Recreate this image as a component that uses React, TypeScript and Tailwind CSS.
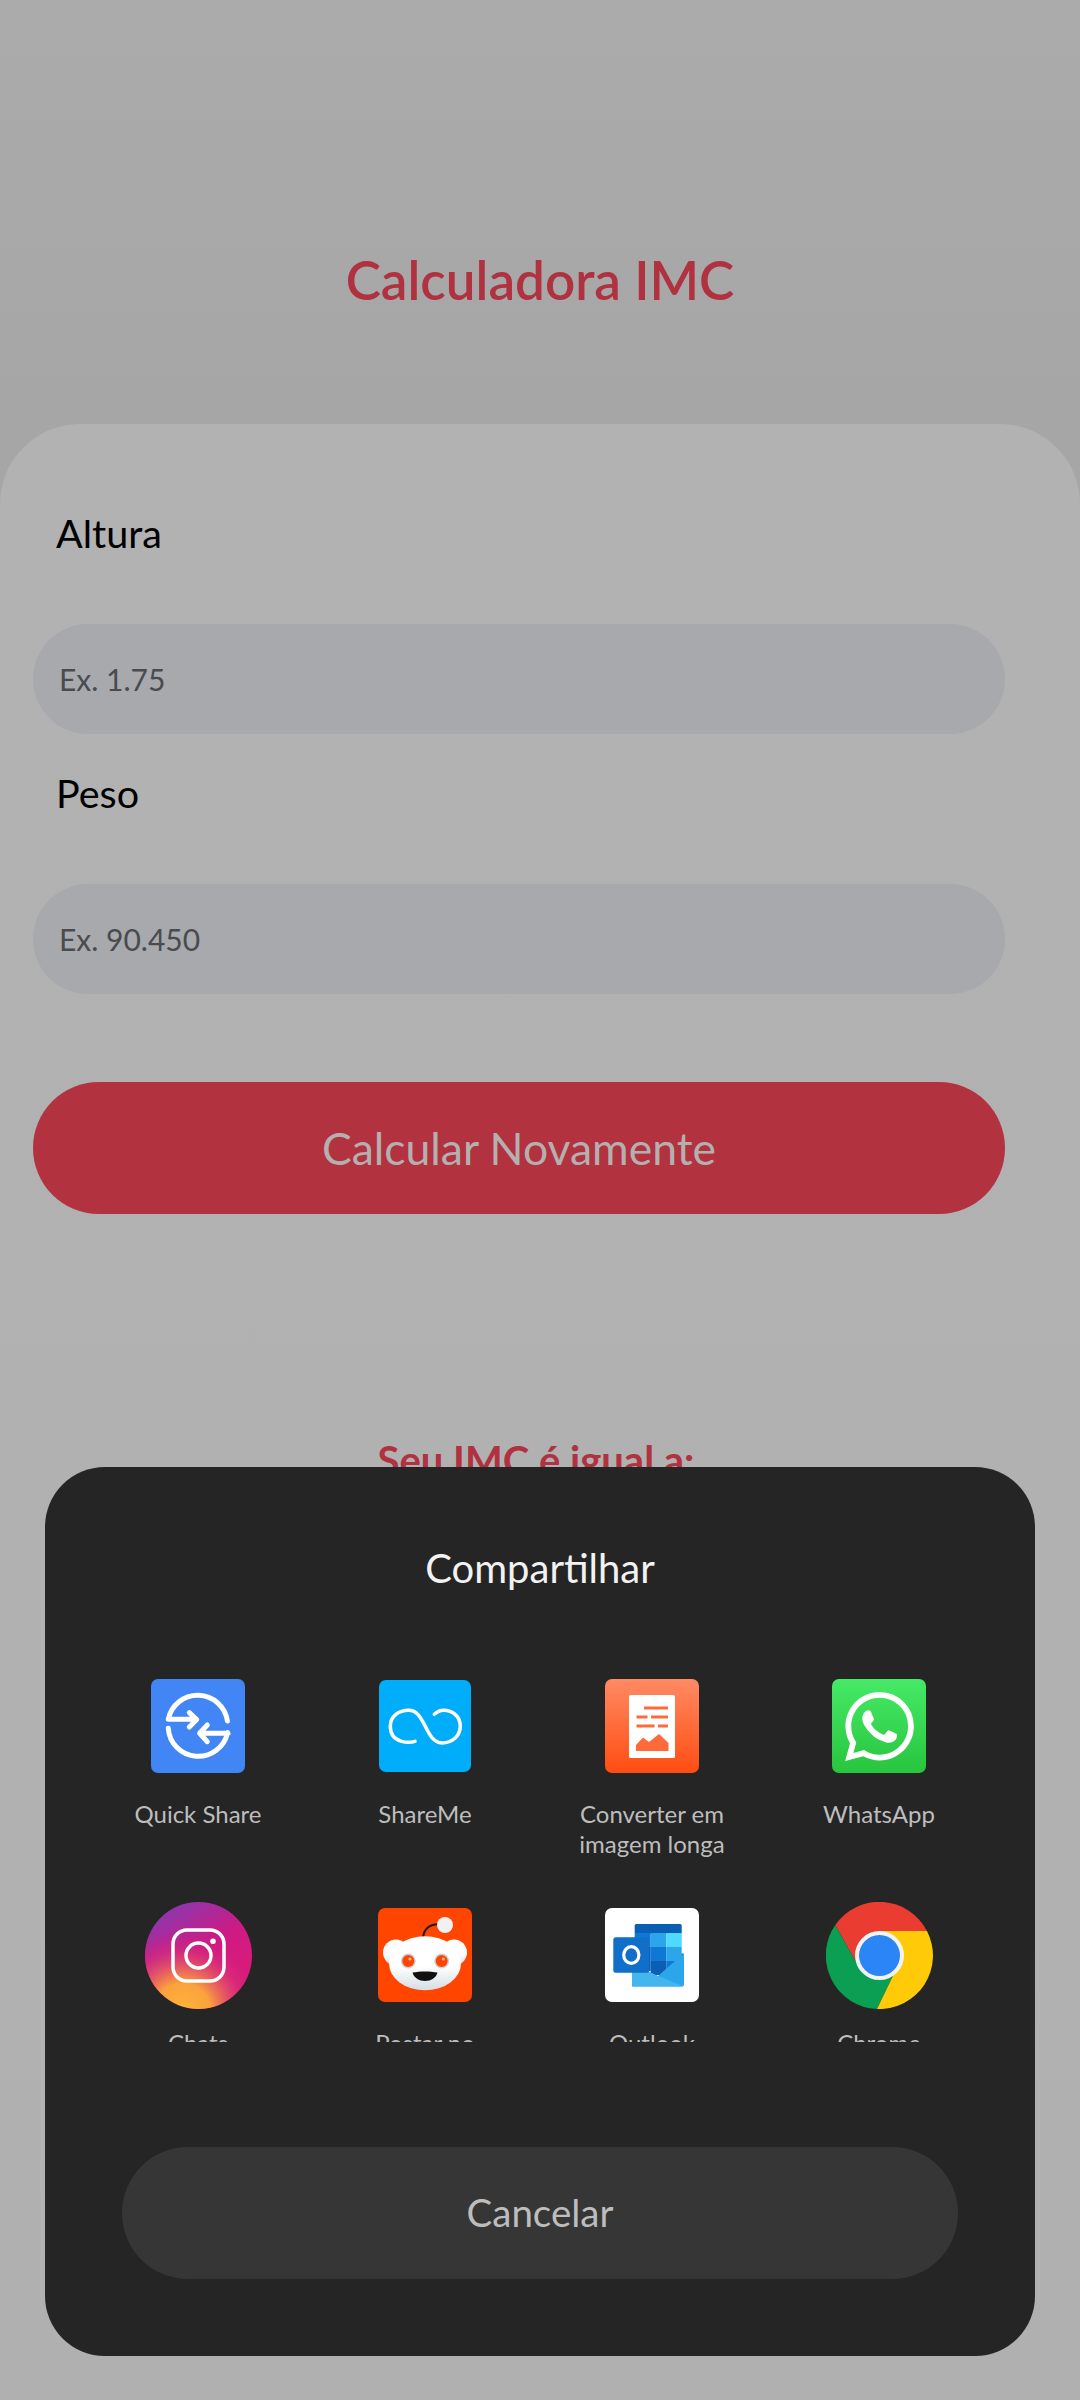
import React from 'react';
import { SiWhatsapp } from 'react-icons/si';

const QuickShareIcon = () => (
  <svg width="94" height="94" viewBox="0 0 94 94" fill="none">
    <rect width="94" height="94" rx="7" fill="#4285f4" />
    <g stroke="#fff" strokeWidth="5" strokeLinecap="round" strokeLinejoin="round">
      <path d="M17.3 40.3A30 30 0 0 1 76.4 42M17.3 40.3H45M38.3 33.7L45.7 40.6L38.3 48" />
      <path d="M17.3 49.3A30 30 0 0 0 76.6 53.5L77 54.3H49M56.3 46L48.6 54.3L56.3 62.7" />
    </g>
  </svg>
);

const ShareMeIcon = () => (
  <svg width="92" height="92" viewBox="0 0 92 92" fill="none">
    <rect width="92" height="92" rx="7" fill="#00adfa" />
    <path d="M36 61.3C31 63 11.3 64 11.3 46.3C11.3 36 20 30.3 29.7 30.3C38 30.3 42 38 46.3 46.3C50.5 55 55 63 63 63C73 63 81.3 56 81.3 46.3C81.3 36 73 30.3 64.7 30.3C61 30.3 58 31.8 55.3 34.3" stroke="#fff" strokeWidth="3.5" strokeLinecap="round" />
  </svg>
);

const LongImageIcon = () => (
  <svg width="94" height="94" viewBox="0 0 94 94" fill="none">
    <defs>
      <linearGradient id="longImg" x1="0" y1="0" x2="0" y2="1">
        <stop stopColor="#ff8a63" />
        <stop offset="1" stopColor="#ff4d12" />
      </linearGradient>
    </defs>
    <rect width="94" height="94" rx="7" fill="url(#longImg)" />
    <rect x="24" y="16" width="46" height="63" rx="1.5" fill="#fff" />
    <g fill="#ff6a3a">
      <rect x="39" y="27.5" width="24" height="3" />
      <rect x="31.5" y="36.5" width="11" height="3" />
      <rect x="46" y="36.5" width="17" height="3" />
      <rect x="31.5" y="45.5" width="18" height="3" />
      <rect x="53" y="45.5" width="10" height="3" />
      <path d="M31 72V66L38 58.5L44 63L54 55L63.5 64V72Z" />
    </g>
  </svg>
);

const WhatsAppIcon = () => (
  <div className="w-[94px] h-[94px] rounded-[7px] bg-gradient-to-b from-[#45ea66] to-[#28c53e] flex items-center justify-center">
    <SiWhatsapp size={69} color="#fff" />
  </div>
);

const InstagramIcon = () => (
  <svg width="107" height="107" viewBox="0 0 107 107" fill="none">
    <defs>
      <radialGradient id="igA" cx="0.35" cy="1.02" r="0.75">
        <stop stopColor="#fdb53a" />
        <stop offset="0.35" stopColor="#fba23c" />
        <stop offset="0.75" stopColor="#d9307a" stopOpacity="0.6" />
        <stop offset="1" stopColor="#d0197f" stopOpacity="0" />
      </radialGradient>
      <linearGradient id="igB" x1="0.3" y1="0" x2="0.7" y2="0.7">
        <stop stopColor="#8b38ae" />
        <stop offset="0.6" stopColor="#cd1a85" />
        <stop offset="1" stopColor="#d81b7a" />
      </linearGradient>
    </defs>
    <circle cx="53.5" cy="53.5" r="53.5" fill="url(#igB)" />
    <circle cx="53.5" cy="53.5" r="53.5" fill="url(#igA)" />
    <rect x="28" y="28" width="51" height="51" rx="14" stroke="#fff" strokeWidth="3.5" />
    <circle cx="53.5" cy="53.5" r="12.5" stroke="#fff" strokeWidth="3.5" />
    <circle cx="68" cy="39.3" r="2.8" fill="#fff" />
  </svg>
);

const RedditIcon = () => (
  <svg width="94" height="94" viewBox="0 0 94 94" fill="none">
    <defs>
      <linearGradient id="snoo" x1="0" y1="0" x2="0" y2="1">
        <stop offset="0.55" stopColor="#fff" />
        <stop offset="1" stopColor="#d5dee4" />
      </linearGradient>
    </defs>
    <rect width="94" height="94" rx="7" fill="#ff4500" />
    <path d="M45.3 29.7C45.3 22 51 16 60.3 16.2" stroke="#1a1a1a" strokeWidth="2" strokeLinecap="round" />
    <circle cx="67" cy="17" r="8" fill="#f1f1f1" />
    <circle cx="18" cy="44.5" r="13" fill="url(#snoo)" />
    <circle cx="76" cy="44.5" r="13" fill="url(#snoo)" />
    <ellipse cx="47" cy="55.3" rx="36" ry="27" fill="url(#snoo)" />
    <circle cx="30.3" cy="53" r="7.5" fill="#c9d2d8" />
    <circle cx="63.7" cy="53" r="7.5" fill="#c9d2d8" />
    <circle cx="30.3" cy="53" r="6" fill="#ff4500" />
    <circle cx="63.7" cy="53" r="6" fill="#ff4500" />
    <circle cx="32" cy="51" r="1.6" fill="#ffb199" />
    <circle cx="65.4" cy="51" r="1.6" fill="#ffb199" />
    <path d="M34.5 64.5C42 63 52 63 59.5 64.5C58 70 53 73 47 73C41 73 36 70 34.5 64.5Z" fill="#111" />
  </svg>
);

const OutlookIcon = () => (
  <svg width="94" height="94" viewBox="0 0 94 94" fill="none">
    <rect width="94" height="94" rx="7" fill="#fff" />
    <rect x="29.7" y="16" width="47" height="10" rx="1.5" fill="#0a5fb5" />
    <rect x="29.7" y="25" width="16" height="14" fill="#0f78d4" />
    <rect x="45.7" y="25" width="15.5" height="14" fill="#2ba6ea" />
    <rect x="61.2" y="25" width="15.5" height="14" fill="#50d9ff" />
    <rect x="29.7" y="39" width="16" height="14" fill="#0a5fb5" />
    <rect x="45.7" y="39" width="15.5" height="14" fill="#0f78d4" />
    <rect x="61.2" y="39" width="15.5" height="14" fill="#2ba6ea" />
    <rect x="29.7" y="53" width="16" height="10" fill="#0a5fb5" />
    <rect x="45.7" y="53" width="15.5" height="14" fill="#0a5fb5" />
    <rect x="61.2" y="53" width="15.5" height="10" fill="#0f78d4" />
    <path d="M76.7 45L79 47L76.7 48Z" fill="#0a3a70" />
    <path d="M27 78.5V56L53 68L79 45V76.5Q79 78.5 77 78.5Z" fill="#2ba6ea" />
    <path d="M27 56L53 68L79 78.5H29Q27 78.5 27 76.5Z" fill="#43b6ee" />
    <rect x="8.3" y="29.3" width="36" height="35.5" rx="2.5" fill="#0f6fc9" />
    <ellipse cx="26.3" cy="47" rx="7.6" ry="8.4" stroke="#fff" strokeWidth="3.2" />
  </svg>
);

const ChromeIcon = () => (
  <svg width="107" height="107" viewBox="0 0 107 107" fill="none">
    <path d="M101 29A53.5 53.5 0 0 0 9.3 23L29.3 59L53.3 29Z" fill="#ea3c30" />
    <path d="M9.3 23A53.5 53.5 0 0 0 51 107L69.3 69L29.3 59Z" fill="#0a9f52" />
    <path d="M101 29A53.5 53.5 0 0 1 51 107L69.3 69L53.3 29Z" fill="#ffcb08" />
    <circle cx="53.5" cy="53.5" r="24.5" fill="#f1f3f4" />
    <circle cx="53.5" cy="53.5" r="20.5" fill="#2b85f6" />
  </svg>
);

const apps: { name: string; icon: React.ReactNode }[] = [
  { name: 'Quick Share', icon: <QuickShareIcon /> },
  { name: 'ShareMe', icon: <ShareMeIcon /> },
  { name: 'Converter em imagem longa', icon: <LongImageIcon /> },
  { name: 'WhatsApp', icon: <WhatsAppIcon /> },
  { name: 'Chats', icon: <InstagramIcon /> },
  { name: 'Postar no Reddit', icon: <RedditIcon /> },
  { name: 'Outlook', icon: <OutlookIcon /> },
  { name: 'Chrome', icon: <ChromeIcon /> },
];

const Field: React.FC<{ label: string; placeholder: string }> = ({ label, placeholder }) => (
  <div>
    <div className="pl-[23px] h-[149px] pt-[32px] text-[39.5px] leading-[52px] text-black">{label}</div>
    <div className="h-[110px] rounded-[55px] bg-[#a8a9ad] flex items-center pl-[26px] text-[30px] text-[#4a4b4f]">
      {placeholder}
    </div>
  </div>
);

export default function App() {
  return (
    <div className="relative w-[1080px] h-[2400px] overflow-hidden bg-[#a6a6a6] font-['Lato',sans-serif]">
      <div className="h-[424px] bg-gradient-to-b from-[#ababab] to-[#a6a6a6] flex justify-center pt-[244px]">
        <h1 className="text-[53px] leading-[72px] font-semibold text-[#b03240]">Calculadora IMC</h1>
      </div>

      <main className="h-[1976px] bg-gradient-to-b from-[#b2b2b2] to-[#b0b0b0] rounded-t-[80px] pt-[51px] px-[33px] w-full">
        <div className="w-[972px] flex flex-col">
          <Field label="Altura" placeholder="Ex. 1.75" />
          <div className="mt-px">
            <Field label="Peso" placeholder="Ex. 90.450" />
          </div>
          <button className="mt-[88px] w-full h-[132px] rounded-[66px] bg-[#b2323f] text-[44.5px] text-[#b5b0b0]">
            Calcular Novamente
          </button>
        </div>
        <p className="mt-[218px] text-center text-[40px] leading-[56px] font-bold text-[#b03240] pr-[8px]">
          Seu IMC é igual a:
        </p>
      </main>

      {/* share sheet */}
      <div className="absolute left-[45px] top-[1467px] w-[990px] h-[889px] rounded-[60px] bg-[#252525] flex flex-col items-center">
        <h2 className="mt-[78px] text-[40px] leading-[46px] text-[#f2f2f2]">Compartilhar</h2>
        <div className="mt-[81px] mr-[3px] w-[908px] h-[370px] overflow-hidden grid grid-cols-4 auto-rows-[229px]">
          {apps.map((app) => (
            <div key={app.name} className="flex flex-col items-center">
              <div className="h-[108px] w-[108px] flex items-center justify-center shrink-0">{app.icon}</div>
              <span className="mt-[19px] w-[160px] text-center text-[24px] leading-[30px] text-[#bdbdbd]">{app.name}</span>
            </div>
          ))}
        </div>
        <button className="mt-[105px] w-[836px] h-[132px] rounded-[66px] bg-[#363636] text-[38.5px] text-[#bdbdbd]">
          Cancelar
        </button>
      </div>
    </div>
  );
}
